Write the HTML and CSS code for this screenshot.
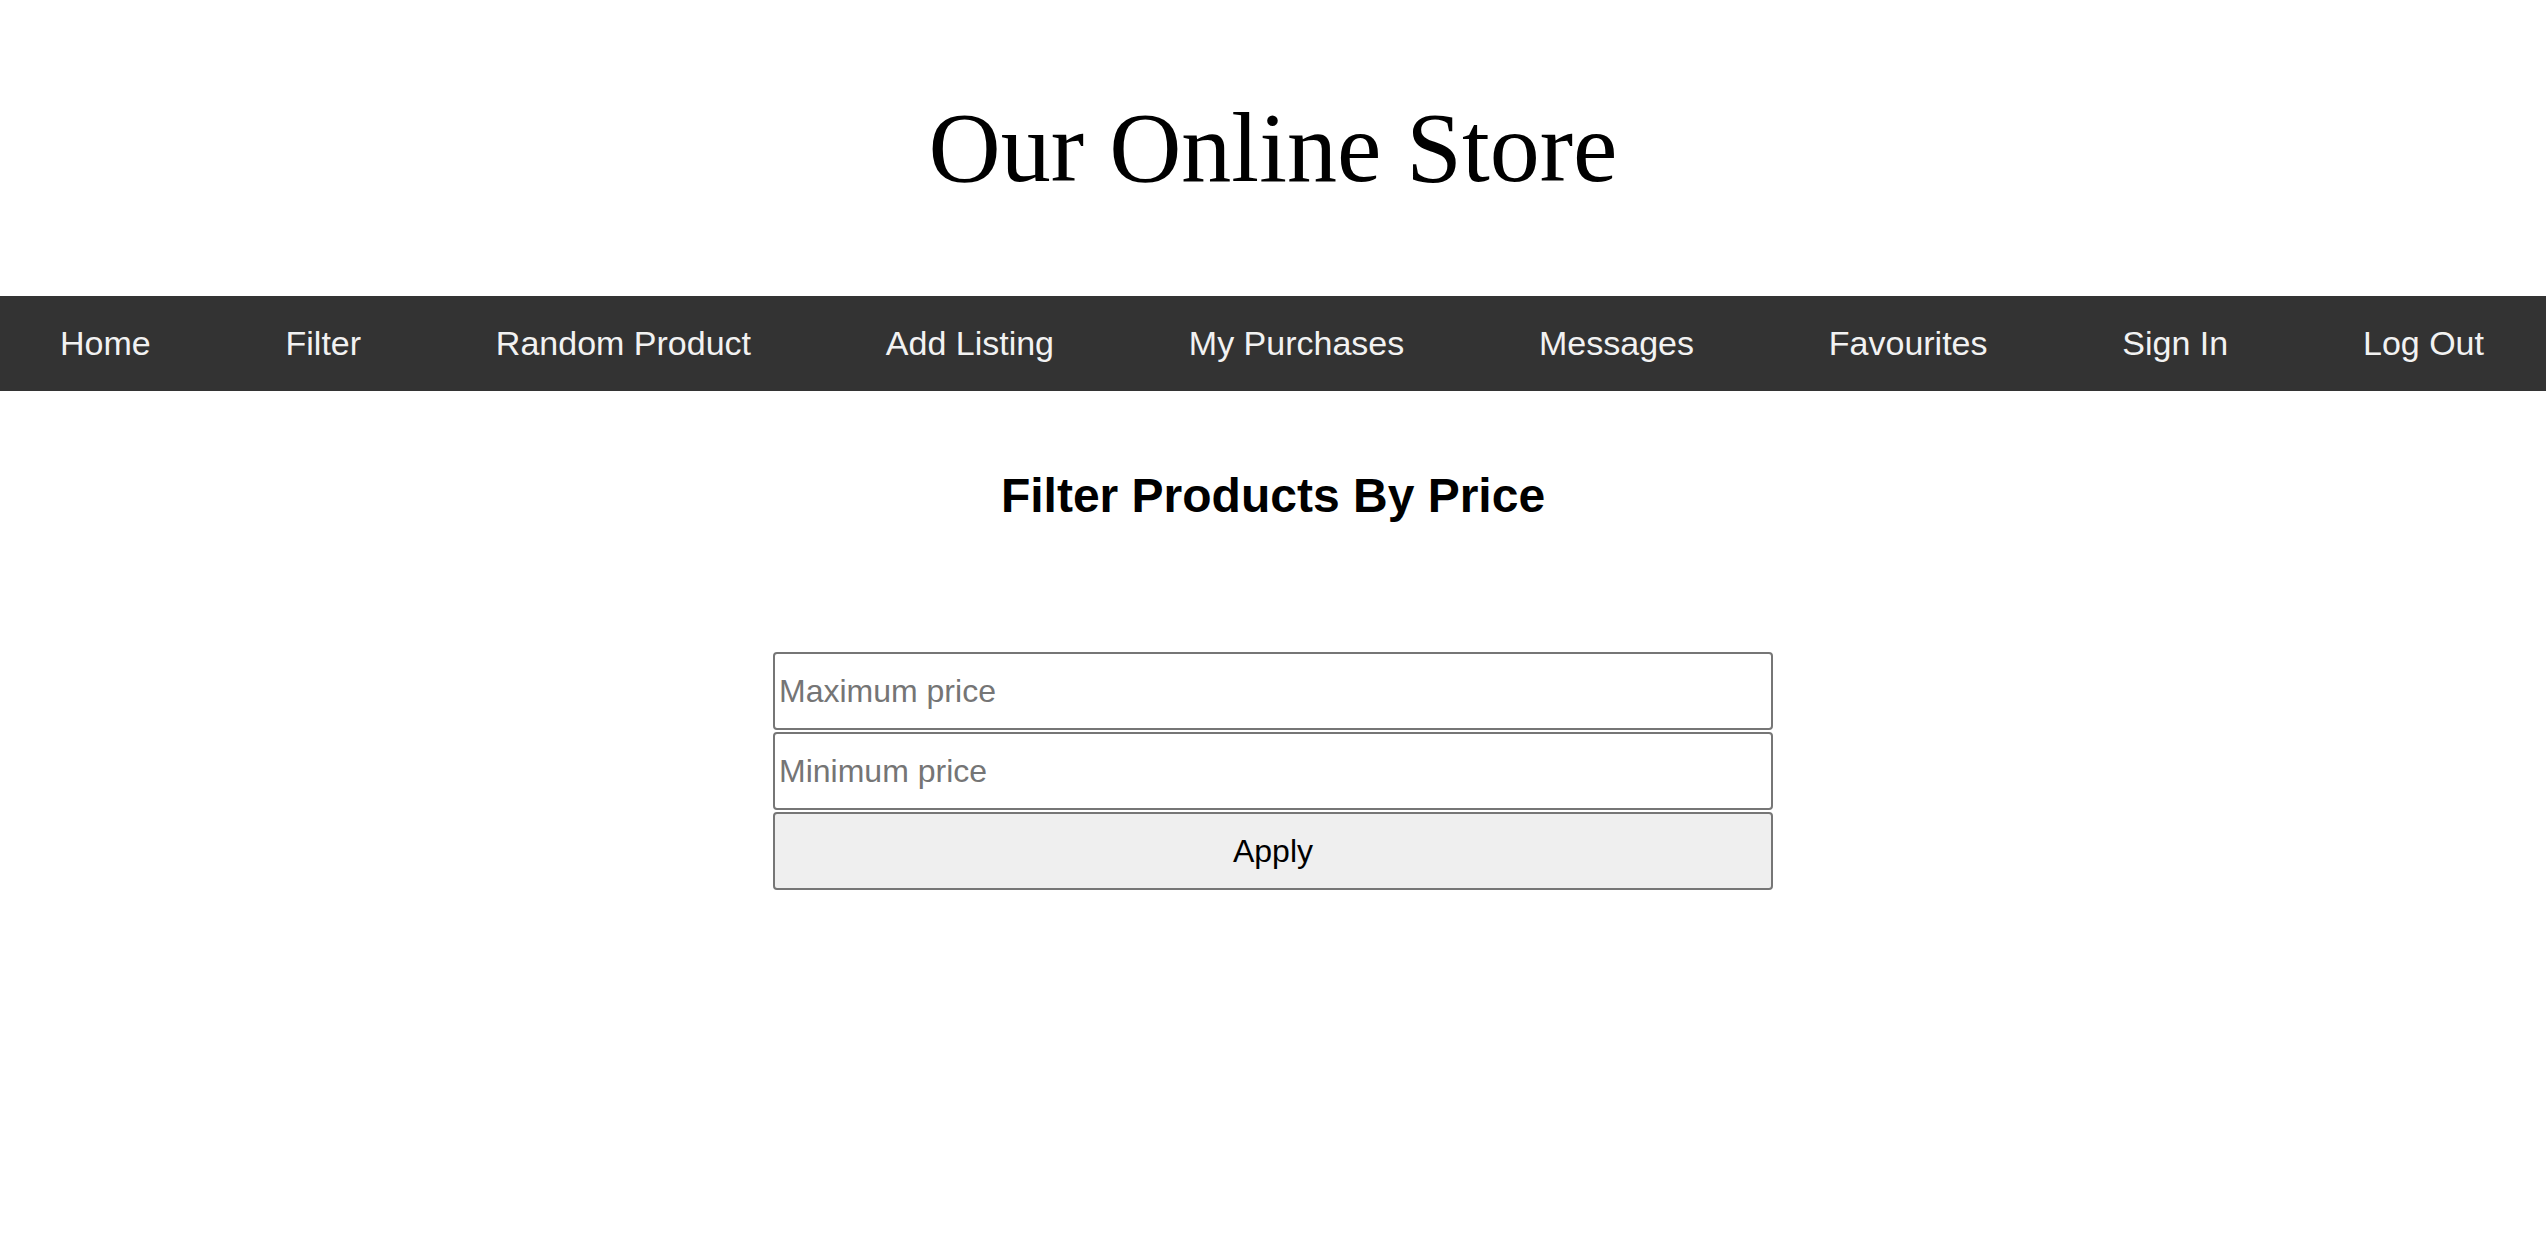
FILE: index.html
```html
<!DOCTYPE html>
<html lang="en">
<head>
<meta charset="utf-8">
<title>Our Online Store</title>
<link rel="stylesheet" href="styles.css">
</head>
<body>
<header class="site-header">
  <h1 class="site-title">Our Online Store</h1>
</header>
<nav class="topnav">
  <a href="#">Home</a>
  <a href="#">Filter</a>
  <a href="#">Random Product</a>
  <a href="#">Add Listing</a>
  <a href="#">My Purchases</a>
  <a href="#">Messages</a>
  <a href="#">Favourites</a>
  <a href="#">Sign In</a>
  <a href="#">Log Out</a>
</nav>
<main class="content">
  <h2 class="page-heading">Filter Products By Price</h2>
  <form class="filter-form">
    <input class="field" type="text" placeholder="Maximum price">
    <input class="field" type="text" placeholder="Minimum price">
    <button class="apply" type="button">Apply</button>
  </form>
</main>
</body>
</html>
```
FILE: styles.css
```css
html, body {
  margin: 0;
  padding: 0;
  background: #ffffff;
}

body {
  font-family: "Liberation Sans", Arial, sans-serif;
  color: #000000;
}

.site-header {
  padding-top: 90px;
  padding-bottom: 91px;
  text-align: center;
}

.site-title {
  margin: 0;
  font-family: "Liberation Serif", "Times New Roman", serif;
  font-weight: normal;
  font-size: 100px;
  line-height: 115px;
}

.topnav {
  display: flex;
  justify-content: space-between;
  align-items: center;
  height: 95px;
  padding: 0 62px 0 60px;
  background: #333333;
}

.topnav a {
  color: #f2f2f2;
  text-decoration: none;
  font-size: 34px;
  line-height: 39px;
}

.content {
  display: flex;
  flex-direction: column;
  align-items: center;
}

.page-heading {
  margin: 77px 0 0 0;
  font-size: 48px;
  line-height: 55px;
  font-weight: bold;
}

.filter-form {
  margin-top: 129px;
  width: 1000px;
  display: flex;
  flex-direction: column;
  gap: 2px;
}

.field,
.apply {
  box-sizing: border-box;
  width: 100%;
  height: 78px;
  margin: 0;
  border: 2px solid #767676;
  border-radius: 4px;
  font-family: "Liberation Sans", Arial, sans-serif;
  font-size: 32px;
}

.field {
  padding: 2px 4px;
  background: #ffffff;
  color: #000000;
}

.field::placeholder {
  color: #757575;
  opacity: 1;
}

.apply {
  background: #efefef;
  color: #000000;
  padding: 2px 12px;
}
```
